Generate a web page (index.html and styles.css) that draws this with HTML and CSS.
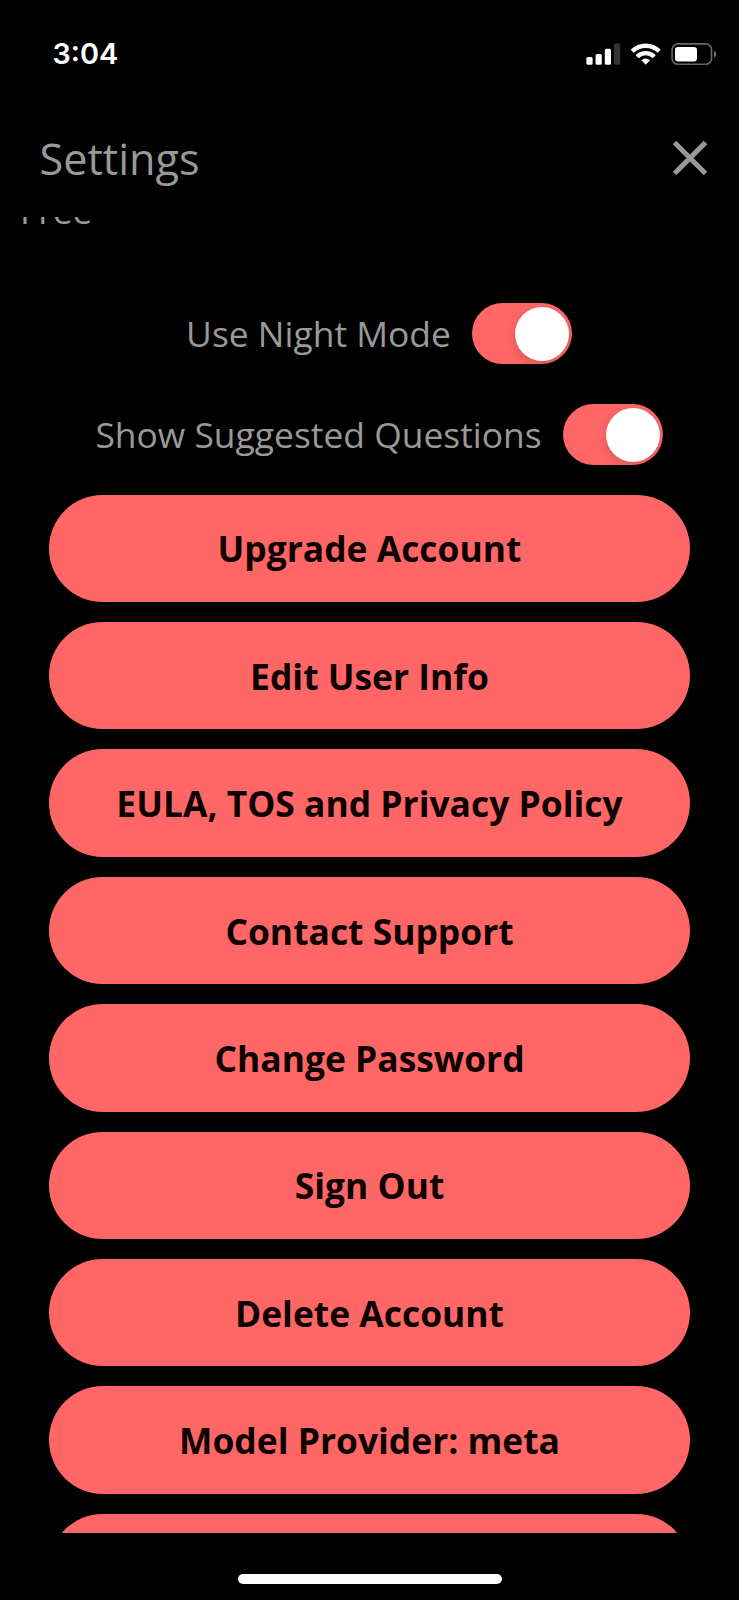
FILE: index.html
```
<!DOCTYPE html>
<html lang="en">
<head>
<meta charset="utf-8">
<title>Settings</title>
<link rel="stylesheet" href="styles.css">
</head>
<body>
<div class="screen">
  <div class="status">
    <span class="time">3:04</span>
    <svg class="status-icons" width="132" height="24" viewBox="0 0 132 24">
      <g fill="#fff">
        <rect x="0.4" y="14" width="6.2" height="7.8" rx="1.6"/>
        <rect x="9.6" y="11" width="6.2" height="10.8" rx="1.6"/>
        <rect x="18.8" y="5.8" width="6.2" height="16" rx="1.6"/>
        <rect x="28" y="0.6" width="6.2" height="21.2" rx="1.6" fill="#343434"/>
      </g>
      <g fill="none" stroke="#fff" stroke-width="4.4">
        <path d="M46.2 8.2a19.3 19.3 0 0 1 27 0"/>
        <path d="M51.2 13.7a12 12 0 0 1 17 0"/>
      </g>
      <path d="M59.7 21.8l-4.3-4.5a6.2 6.2 0 0 1 8.6 0z" fill="#fff"/>
      <rect x="86.1" y="0.9" width="39.4" height="20.4" rx="5.8" fill="none" stroke="#686868" stroke-width="1.6"/>
      <rect x="89" y="4" width="22" height="14.4" rx="3.2" fill="#fff"/>
      <path d="M128 7.7a3.9 3.9 0 0 1 0 7z" fill="#777"/>
    </svg>
  </div>
  <header class="header">
    <h1 class="title">Settings</h1>
    <svg class="close" width="36" height="36" viewBox="0 0 36 36">
      <path d="M2.5 2.5l31 31M33.5 2.5l-31 31" stroke="#999" stroke-width="5" fill="none"/>
    </svg>
  </header>
  <main class="content">
    <p class="plan">Free</p>
    <div class="setting night"><span class="label">Use Night Mode</span><i class="toggle"></i></div>
    <div class="setting suggested"><span class="label">Show Suggested Questions</span><i class="toggle"></i></div>
    <div class="actions">
      <button class="action">Upgrade Account</button>
      <button class="action">Edit User Info</button>
      <button class="action">EULA, TOS and Privacy Policy</button>
      <button class="action">Contact Support</button>
      <button class="action">Change Password</button>
      <button class="action">Sign Out</button>
      <button class="action">Delete Account</button>
      <button class="action">Model Provider: meta</button>
      <button class="action"></button>
    </div>
  </main>
  <footer class="footer"><div class="home"></div></footer>
</div>
</body>
</html>
```
FILE: styles.css
```
* { box-sizing: border-box; }
body { margin: 0; background: #000; }
.screen {
  width: 739px;
  height: 1600px;
  display: flex;
  flex-direction: column;
  overflow: hidden;
  background: #000;
  color: #999;
  font-family: "Open Sans", "Noto Sans", sans-serif;
}
.status {
  height: 110px;
  padding: 43px 21px 0 52.5px;
  display: flex;
  justify-content: space-between;
  align-items: flex-start;
}
.time {
  margin-top: -1px;
  color: #fff;
  font: 600 28.8px/24px Inter, sans-serif;
}
.header {
  height: 107px;
  padding: 0 31px 0 39.5px;
  display: flex;
  justify-content: space-between;
  align-items: flex-start;
}
.title {
  margin: 19px 0 0;
  font-size: 43.2px;
  line-height: 60px;
  font-weight: 400;
}
.close { margin-top: 30px; }
.content {
  height: 1316px;
  overflow: hidden;
  display: flex;
  flex-direction: column;
  align-items: center;
}
.plan {
  align-self: flex-start;
  margin: -31px 0 0 20px;
  font-size: 35.4px;
  line-height: 48px;
}
.setting {
  height: 61px;
  display: flex;
  align-items: center;
  gap: 21px;
  font-size: 35.42px;
  white-space: nowrap;
}
.label { padding-bottom: 2px; }
.night { margin-top: 69px; margin-left: 19.5px; }
.suggested { margin-top: 40px; margin-left: 19.5px; }
.toggle {
  width: 100.5px;
  height: 61px;
  padding: 3.5px;
  border-radius: 31px;
  background: #ff6766;
  display: flex;
  justify-content: flex-end;
  overflow: hidden;
}
.toggle::after {
  content: "";
  width: 54px;
  height: 54px;
  border-radius: 50%;
  background: #fff;
  box-shadow: 0 4px 12px rgba(0, 0, 0, 0.15);
}
.actions {
  width: 640.4px;
  margin-top: 29.6px;
  display: flex;
  flex-direction: column;
  gap: 19.9px;
}
.action {
  flex: none;
  height: 107.5px;
  padding: 0;
  border: 0;
  border-radius: 54px;
  background: #ff6766;
  color: #0d0000;
  font: 700 35.42px/48px "Open Sans", "Noto Sans", sans-serif;
}
.footer {
  flex: 1;
  padding-top: 41px;
  display: flex;
  justify-content: center;
}
.home {
  width: 264px;
  height: 10px;
  border-radius: 5px;
  background: #fff;
}
```
